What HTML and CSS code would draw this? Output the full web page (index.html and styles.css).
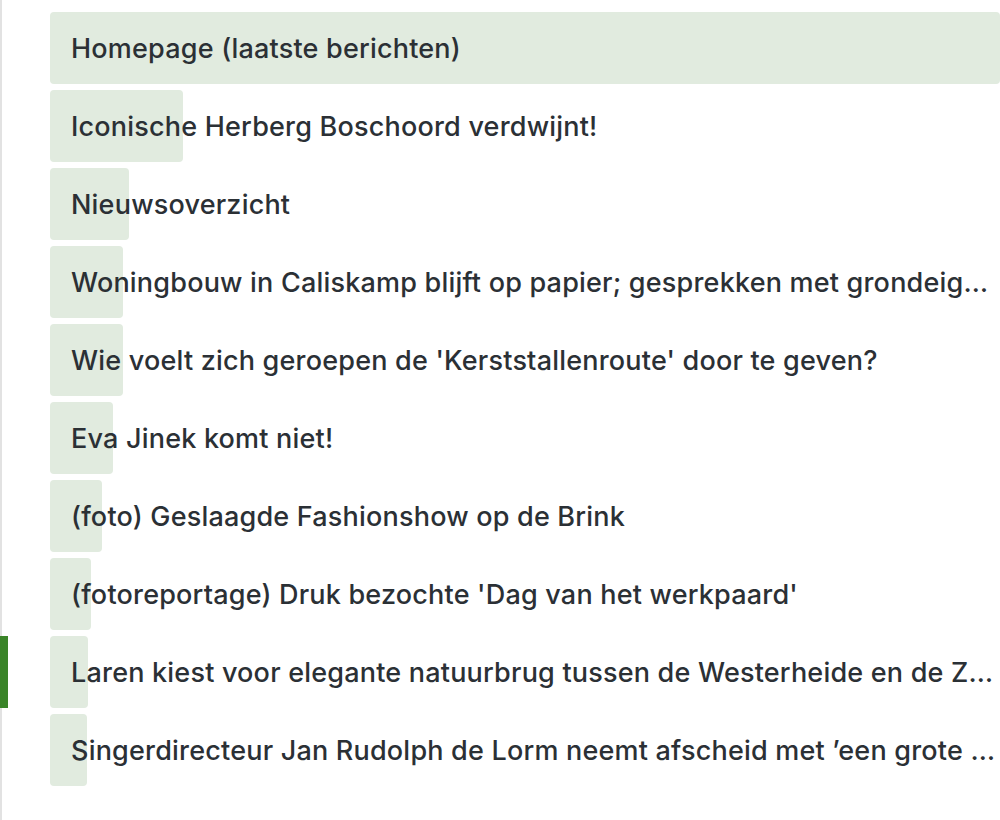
FILE: index.html
```html
<!DOCTYPE html>
<html lang="nl">
<head>
<meta charset="utf-8">
<link rel="stylesheet" href="styles.css">
</head>
<body>
<div class="panel">
  <ul class="list">
    <li class="item"><span class="bar" style="width:950px"></span><span class="label">Homepage (laatste berichten)</span></li>
    <li class="item"><span class="bar" style="width:133px"></span><span class="label">Iconische Herberg Boschoord verdwijnt!</span></li>
    <li class="item"><span class="bar" style="width:79px"></span><span class="label">Nieuwsoverzicht</span></li>
    <li class="item"><span class="bar" style="width:73px"></span><span class="label">Woningbouw in Caliskamp blijft op papier; gesprekken met grondeigenaren lopen vast</span></li>
    <li class="item"><span class="bar" style="width:73px"></span><span class="label">Wie voelt zich geroepen de 'Kerststallenroute' door te geven?</span></li>
    <li class="item"><span class="bar" style="width:63px"></span><span class="label">Eva Jinek komt niet!</span></li>
    <li class="item"><span class="bar" style="width:52px"></span><span class="label">(foto) Geslaagde Fashionshow op de Brink</span></li>
    <li class="item"><span class="bar" style="width:41px"></span><span class="label">(fotoreportage) Druk bezochte 'Dag van het werkpaard'</span></li>
    <li class="item active"><span class="bar" style="width:38px"></span><span class="label">Laren kiest voor elegante natuurbrug tussen de Westerheide en de Zuiderheide</span></li>
    <li class="item"><span class="bar" style="width:37px"></span><span class="label">Singerdirecteur Jan Rudolph de Lorm neemt afscheid met ’een grote tentoonstelling’</span></li>
  </ul>
</div>
</body>
</html>
```
FILE: styles.css
```css
html, body {
  margin: 0;
  padding: 0;
  background: #ffffff;
}
body {
  font-family: Inter, "Noto Sans", "Liberation Sans", sans-serif;
  color: #2b3035;
}
.panel {
  width: 1000px;
  height: 820px;
  box-sizing: border-box;
  border-left: 2px solid #e2e2e2;
  padding: 12px 0 0 48px;
}
.list {
  list-style: none;
  margin: 0;
  padding: 0;
  display: flex;
  flex-direction: column;
  gap: 6px;
}
.item {
  position: relative;
  height: 72px;
  display: flex;
  align-items: center;
  padding: 0 5px 0 21px;
}
.item.active::before {
  content: "";
  position: absolute;
  left: -50px;
  top: 0;
  width: 8px;
  height: 72px;
  background: #3a8428;
}
.bar {
  position: absolute;
  left: 0;
  top: 0;
  bottom: 0;
  background: #e1ebdf;
  border-radius: 4px;
}
.label {
  position: relative;
  font-size: 27px;
  font-weight: 500;
  letter-spacing: 0.2px;
  white-space: nowrap;
  overflow: hidden;
  text-overflow: ellipsis;
  min-width: 0;
}
```
